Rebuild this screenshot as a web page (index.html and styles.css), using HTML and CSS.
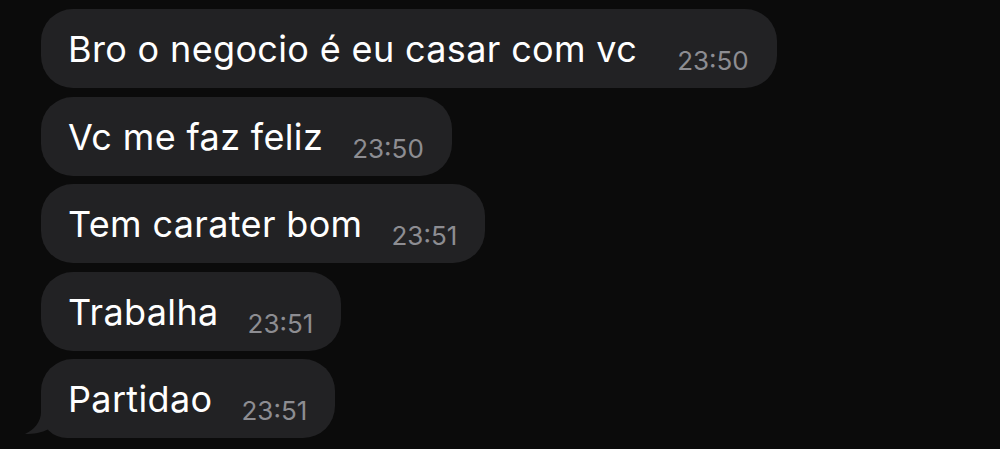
FILE: index.html
```html
<!DOCTYPE html>
<html lang="pt">
<head>
    <meta charset="UTF-8">
    <title>Chat</title>
    <link rel="stylesheet" href="styles.css">
</head>
<body>
    <div class="chat">
        <div class="bubble bubble-wide">
            <span class="text">Bro o negocio é eu casar com vc</span>
            <span class="time">23:50</span>
        </div>
        <div class="bubble">
            <span class="text">Vc me faz feliz</span>
            <span class="time">23:50</span>
        </div>
        <div class="bubble">
            <span class="text">Tem carater bom</span>
            <span class="time">23:51</span>
        </div>
        <div class="bubble">
            <span class="text">Trabalha</span>
            <span class="time">23:51</span>
        </div>
        <div class="bubble bubble-last">
            <svg class="tail" width="40" height="40" viewBox="0 0 40 40">
                <path d="M20 0 L20 14 C20 24 13 32 4 36 C13 36 20 35 28 31 L40 31 L40 0 Z" fill="#222224"/>
            </svg>
            <span class="text">Partidao</span>
            <span class="time">23:51</span>
        </div>
    </div>
</body>
</html>
```

FILE: styles.css
```css
:root {
    --bg: #0b0b0b;
    --bubble: #222224;
    --text: #ffffff;
    --muted: #8d8d92;
}

body {
    margin: 0;
    background: var(--bg);
    font-family: Inter, Roboto, 'Noto Sans', sans-serif;
    color: var(--text);
}

.chat {
    display: flex;
    flex-direction: column;
    align-items: flex-start;
    gap: 8.5px;
    padding: 9px 0 0 41px;
}

.bubble {
    position: relative;
    display: flex;
    align-items: baseline;
    gap: 29px;
    height: 79px;
    box-sizing: border-box;
    padding: 18px 28px 0 27px;
    background: var(--bubble);
    border-radius: 32px;
}

.bubble-wide {
    gap: 40px;
}

.text {
    font-size: 36px;
    line-height: 44px;
    letter-spacing: 0.35px;
}

.time {
    font-size: 26px;
    color: var(--muted);
    position: relative;
    top: 8px;
}

.bubble-last {
    border-bottom-left-radius: 26px;
}

.tail {
    position: absolute;
    left: -20px;
    bottom: 0;
}
```
